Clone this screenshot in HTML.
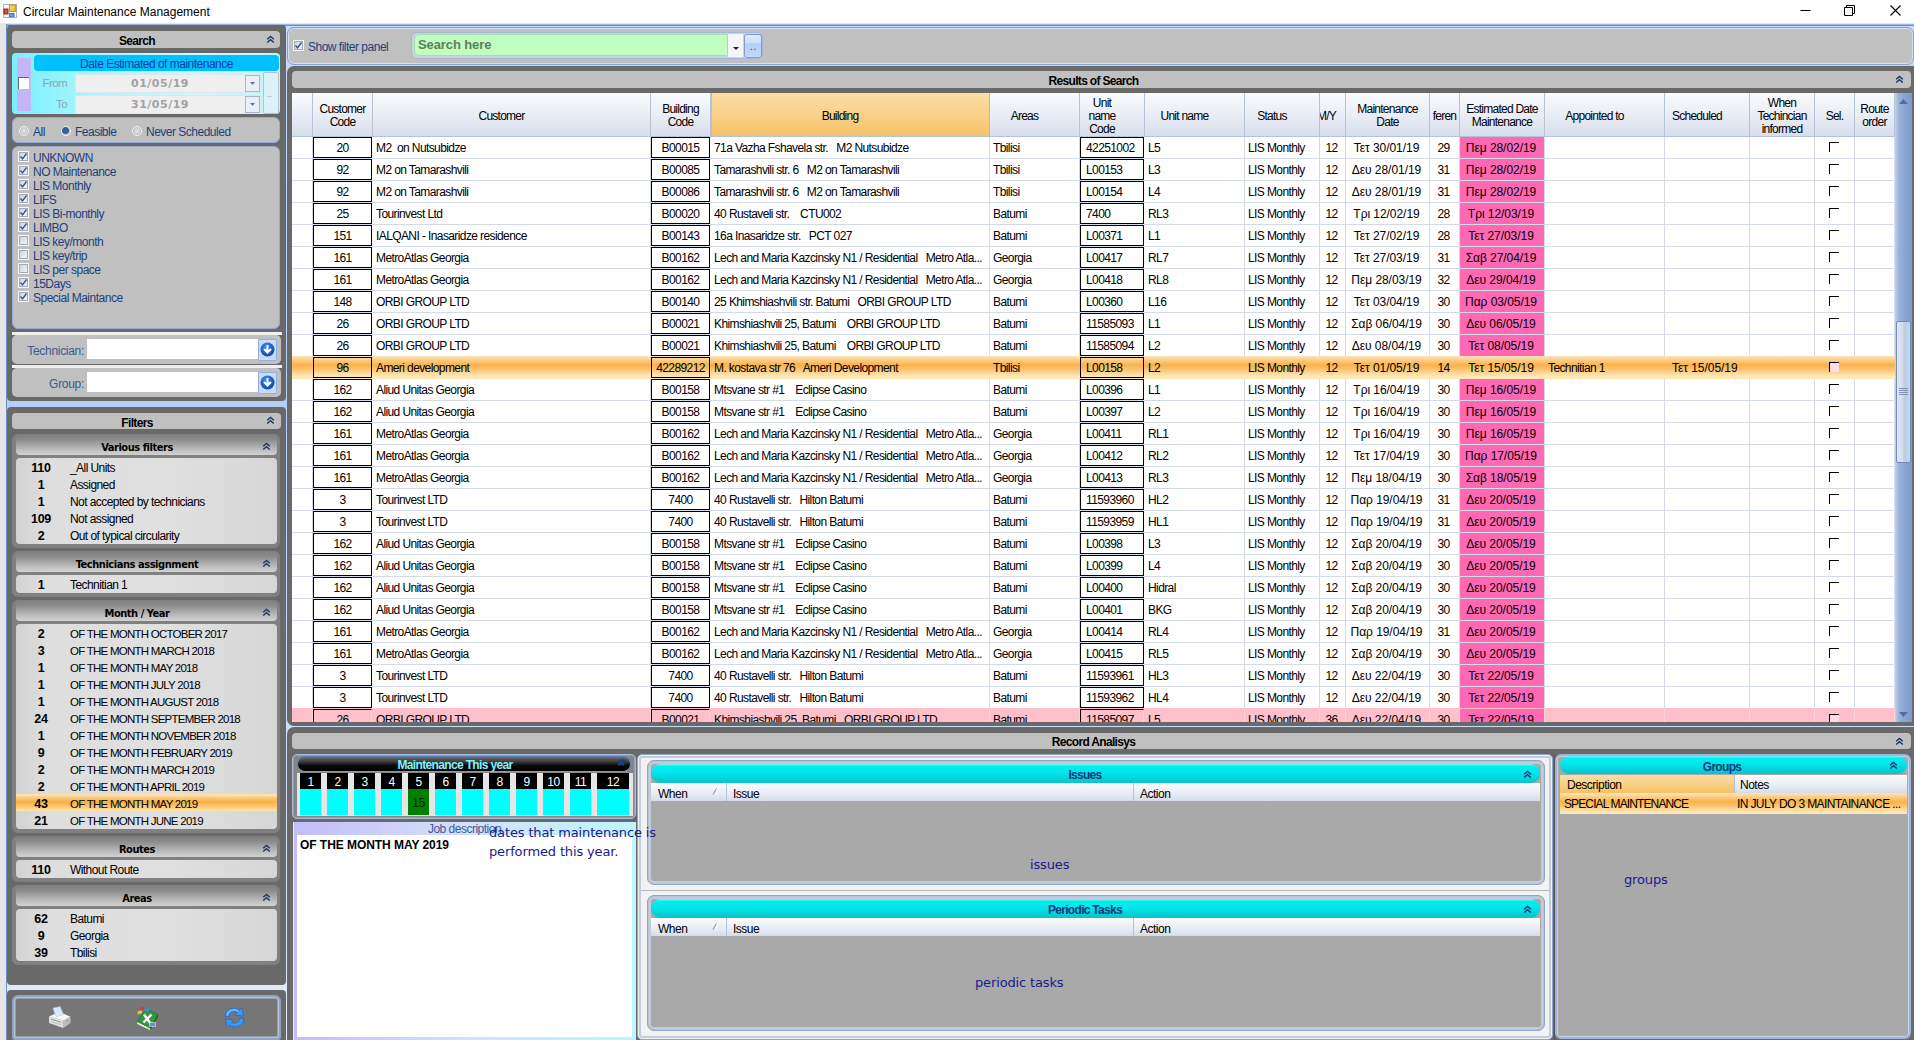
<!DOCTYPE html><html><head><meta charset="utf-8"><title>Circular Maintenance Management</title><style>
*{box-sizing:border-box;margin:0;padding:0}
html,body{width:1914px;height:1040px;overflow:hidden;background:linear-gradient(#c5daf6,#b6d0f5 40%,#e4ecfa);font-family:"Liberation Sans",sans-serif;font-size:12px;letter-spacing:-0.5px;color:#000}
.a{position:absolute}
.t{position:absolute;white-space:pre;line-height:14px}
#title{left:0;top:0;width:1914px;height:23px;background:#fff}
#title .cap{left:23px;top:4px;font-size:12px;line-height:16px;color:#000;letter-spacing:0}
.dark{background:#696969}
.silver{background:#c0c0c0}
.hdr{background:#c0c0c0;border-radius:4px}
.hdr b{position:absolute;top:1px;left:0;width:250px;text-align:center;font-size:12px;line-height:19px;letter-spacing:-0.67px}
.chev{position:absolute}
.blue{color:#1e3f7a}
.sub{background:#808080;border-radius:6px}
.subh{border-radius:5px 5px 4px 4px;background:linear-gradient(#7e7e7e,#8a8a8a 25%,#a4a4a4 50%,#c0c0c0 78%,#d2d2d2)}
.subh b{position:absolute;left:0;width:242px;text-align:center;font-family:'DejaVu Sans Condensed','DejaVu Sans',sans-serif;font-size:11px;line-height:20px;top:4px;letter-spacing:-0.45px}
.lst{background:linear-gradient(90deg,#d2d2d2,#dedede 12%,#e0e0e0 60%,#d6d6d6);border-radius:4px;overflow:hidden}
.lr{position:absolute;left:0;right:0;height:17px}
.lr .n{position:absolute;left:0;top:2px;width:50px;text-align:center;font-weight:bold;font-size:12.5px;line-height:17px;letter-spacing:-0.3px}
.lr .x{position:absolute;left:54px;top:2px;line-height:17px;white-space:pre;letter-spacing:-0.57px}
.lr .x.m{letter-spacing:-0.75px;font-size:11.5px}
.sel{background:linear-gradient(#fde6bd,#fbcb7e 22%,#f9ae42 46%,#fbc46c 70%,#fde5ae)}
.cb{position:absolute;width:11px;height:11px;border:1px solid #f6f6f6;background:linear-gradient(135deg,#c9cfd8,#e4e9f0 60%,#f2f4f8)}
.cb i{position:absolute;left:0;top:0;width:9px;height:9px;border:1px solid #a3abb8}
.rb{position:absolute;width:10px;height:10px;border-radius:50%;border:1.5px solid #f4f4f4;background:radial-gradient(#e0e0e0,#c4c4c4);box-shadow:inset 0 0 0 .6px #b0b0b0}
.gh{position:absolute;top:0;height:44px;padding-top:2px;border-right:1px solid #b4c3d8;display:flex;align-items:center;justify-content:center;text-align:center;line-height:13px;overflow:hidden;white-space:nowrap;background:linear-gradient(#f9fbfd,#e9edf5 50%,#d7ddeb);letter-spacing:-0.75px}
.row{position:absolute;left:0;width:1603px;height:22px;border-bottom:1px solid #d4dbe8;background:#fff}
.c{position:absolute;top:0;height:21px;line-height:21px;white-space:pre;overflow:hidden;border-right:1px solid #d4dbe8;padding-left:3px;letter-spacing:-0.6px;line-height:22px}
.c.dt{letter-spacing:-0.05px}
.c.bx{border:1px solid #000;text-align:center;padding:0;height:21px;top:0;line-height:20px;background:#fff}
.c.ct{text-align:center;padding:0 2px 0 0}
.pk{background:#ff69b4}
.ck{position:absolute;left:14px;top:5px;width:10px;height:10px;border-left:1px solid #000;border-top:1px solid #000;background:#fff}
.row.s{background:linear-gradient(#fde5be,#fbc97c 22%,#f9b24b 42%,#fbc06a 58%,#fddb9e 80%,#fdedc4);height:23px;margin-top:-1px;border-bottom-color:#fde8b4}
.row.s .c{top:1px}
.row.s .c{border-right-color:transparent}
.row.s .c.bx{background:transparent;border-color:#000}
.row.p{background:#ffc0cb;height:23px;margin-top:-1px}
.row.p .c{top:1px;border-right-color:#ffd3db}
.row.p .c.bx{background:transparent}
.cy{background:linear-gradient(#7ff6f8,#00f0f2 12%,#00e6ea 45%,#06cdd4 85%,#12bfc8);border-radius:9px}
.cy b{position:absolute;top:1px;left:0;right:0;text-align:center;font-size:12px;line-height:20px;color:#0a3a7a;letter-spacing:-0.7px}
.note{z-index:5;font-family:"DejaVu Sans",sans-serif;color:#1a1a8c;font-size:13px;letter-spacing:-0.14px}
</style></head><body>
<div id="title" class="a">
<svg class="a" style="left:3px;top:4px" width="14" height="14" viewBox="0 0 14 14"><defs><linearGradient id="ty" x1="0" y1="0" x2="1" y2="1"><stop offset="0" stop-color="#fbe27a"/><stop offset="1" stop-color="#e8b020"/></linearGradient></defs><rect x=".5" y=".5" width="13" height="13" fill="#fff" stroke="#b4b4b4"/><rect x="1" y="5" width="4" height="5" fill="#e05040" stroke="#8a1a14" stroke-width=".9"/><rect x="6.3" y="1" width="6.5" height="6.5" fill="url(#ty)" stroke="#b58a18" stroke-width=".9"/><rect x="6.3" y="9.5" width="4.8" height="3.3" fill="#6a9ae8" stroke="#3a66b8" stroke-width=".8"/></svg>
<div class="t cap">Circular Maintenance Management</div>
<svg class="a" style="left:1790px;top:0" width="124" height="23" viewBox="0 0 124 23"><path d="M10.5 10.5h10" stroke="#000" stroke-width="1" fill="none"/><path d="M54.5 7.5h8v8h-8z M56.5 7.5v-2h8v8h-2" stroke="#000" stroke-width="1" fill="none"/><path d="M100.5 5.5l10 10M110.5 5.5l-10 10" stroke="#000" stroke-width="1.1" fill="none"/></svg>
</div>
<div class="a" style="left:0;top:23px;width:7px;height:1017px;background:#e6e6e6;border-right:1px solid #6f8fc4"></div>
<div class="a" style="left:0;top:23px;width:1914px;height:1px;background:#dfe9f7"></div>
<div class="a" style="left:7px;top:24px;width:1907px;height:2px;background:linear-gradient(#b4c9e9,#5a7ab0)"></div>
<div class="a dark" style="left:7px;top:25px;width:279px;height:376px;border-radius:4px"></div>
<div class="a hdr" style="left:12px;top:31px;width:268px;height:17px"><b>Search</b><svg class="chev" style="left:254px;top:4px" width="9" height="9" viewBox="0 0 9 9"><path d="M1.2 4.3 L4.5 1.5 L7.8 4.3 M1.2 7.5 L4.5 4.7 L7.8 7.5" fill="none" stroke="#1c3868" stroke-width="1.45"/></svg></div>
<div class="a" style="left:12px;top:53px;width:268px;height:61px;border-radius:4px;background:linear-gradient(90deg,#7beffd,#a8f6fe 30%,#cffaff 70%,#b6f7ff)"></div>
<div class="a" style="left:17px;top:58px;width:14px;height:53px;background:#c3b7f7"></div>
<div class="a" style="left:18px;top:77px;width:11px;height:12px;background:#fff;border-left:1px solid #666;border-top:1px solid #666"></div>
<div class="a" style="left:34px;top:55px;width:245px;height:16px;background:#00bfff;border-radius:4px;text-align:center;line-height:18px;color:#10409c;font-size:12px">Date Estimated of maintenance</div>
<div class="a" style="left:75px;top:74px;width:186px;height:19px;background:#efefef;border:1px solid #dde6ea"></div>
<div class="t" style="left:36px;top:76px;width:31px;text-align:right;color:#8ba4b4;line-height:15px;font-size:11.5px;letter-spacing:-0.6px">From</div>
<div class="t" style="left:75px;top:76px;width:170px;text-align:center;color:#a3a3a3;font-family:DejaVu Sans,sans-serif;font-weight:bold;font-size:11px;letter-spacing:0.5px;line-height:15px">01/05/19</div>
<div class="a" style="left:245px;top:75px;width:15px;height:17px;background:#e9eef8;border:1px solid #a9b6cc"></div>
<svg class="a" style="left:250px;top:82px" width="5" height="3"><path d="M0 0h5L2.5 3z" fill="#6a7890"/></svg>
<div class="a" style="left:75px;top:95px;width:186px;height:19px;background:#efefef;border:1px solid #dde6ea"></div>
<div class="t" style="left:36px;top:97px;width:31px;text-align:right;color:#8ba4b4;line-height:15px;font-size:11.5px;letter-spacing:-0.6px">To</div>
<div class="t" style="left:75px;top:97px;width:170px;text-align:center;color:#a3a3a3;font-family:DejaVu Sans,sans-serif;font-weight:bold;font-size:11px;letter-spacing:0.5px;line-height:15px">31/05/19</div>
<div class="a" style="left:245px;top:96px;width:15px;height:17px;background:#e9eef8;border:1px solid #a9b6cc"></div>
<svg class="a" style="left:250px;top:103px" width="5" height="3"><path d="M0 0h5L2.5 3z" fill="#6a7890"/></svg>
<div class="a" style="left:263px;top:72px;width:16px;height:42px;background:#def1fb;border:1px solid #a9c6dc;border-radius:2px"></div>
<div class="t" style="left:267px;top:87px;color:#8ea0b8;font-size:10px">..</div>
<div class="a silver" style="left:12px;top:117px;width:268px;height:26px;border-radius:6px;border:1px solid #93a9cf"></div>
<div class="rb" style="left:19px;top:126px"></div>
<div class="t blue" style="left:33px;top:125px;font-size:12px">All</div>
<div class="rb" style="left:61px;top:126px"><div class="a" style="left:0;top:0;width:7px;height:7px;border-radius:50%;background:#3b5f9c"></div></div>
<div class="t blue" style="left:75px;top:125px;font-size:12px">Feasible</div>
<div class="rb" style="left:132px;top:126px"></div>
<div class="t blue" style="left:146px;top:125px;font-size:12px">Never Scheduled</div>
<div class="a silver" style="left:12px;top:146px;width:268px;height:183px;border-radius:6px;border:1px solid #93a9cf"></div>
<div class="cb" style="left:18px;top:151px"><i></i><svg class="a" style="left:0;top:0" width="9" height="9" viewBox="0 0 9 9"><path d="M1.5 4.5L3.5 6.8L7.5 1.5" stroke="#3a5488" stroke-width="1.4" fill="none"/></svg></div>
<div class="t blue" style="left:33px;top:151px;font-size:12px">UNKNOWN</div>
<div class="cb" style="left:18px;top:165px"><i></i><svg class="a" style="left:0;top:0" width="9" height="9" viewBox="0 0 9 9"><path d="M1.5 4.5L3.5 6.8L7.5 1.5" stroke="#3a5488" stroke-width="1.4" fill="none"/></svg></div>
<div class="t blue" style="left:33px;top:165px;font-size:12px">NO Maintenance</div>
<div class="cb" style="left:18px;top:179px"><i></i><svg class="a" style="left:0;top:0" width="9" height="9" viewBox="0 0 9 9"><path d="M1.5 4.5L3.5 6.8L7.5 1.5" stroke="#3a5488" stroke-width="1.4" fill="none"/></svg></div>
<div class="t blue" style="left:33px;top:179px;font-size:12px">LIS Monthly</div>
<div class="cb" style="left:18px;top:193px"><i></i><svg class="a" style="left:0;top:0" width="9" height="9" viewBox="0 0 9 9"><path d="M1.5 4.5L3.5 6.8L7.5 1.5" stroke="#3a5488" stroke-width="1.4" fill="none"/></svg></div>
<div class="t blue" style="left:33px;top:193px;font-size:12px">LIFS</div>
<div class="cb" style="left:18px;top:207px"><i></i><svg class="a" style="left:0;top:0" width="9" height="9" viewBox="0 0 9 9"><path d="M1.5 4.5L3.5 6.8L7.5 1.5" stroke="#3a5488" stroke-width="1.4" fill="none"/></svg></div>
<div class="t blue" style="left:33px;top:207px;font-size:12px">LIS Bi-monthly</div>
<div class="cb" style="left:18px;top:221px"><i></i><svg class="a" style="left:0;top:0" width="9" height="9" viewBox="0 0 9 9"><path d="M1.5 4.5L3.5 6.8L7.5 1.5" stroke="#3a5488" stroke-width="1.4" fill="none"/></svg></div>
<div class="t blue" style="left:33px;top:221px;font-size:12px">LIMBO</div>
<div class="cb" style="left:18px;top:235px"><i></i></div>
<div class="t blue" style="left:33px;top:235px;font-size:12px">LIS key/month</div>
<div class="cb" style="left:18px;top:249px"><i></i></div>
<div class="t blue" style="left:33px;top:249px;font-size:12px">LIS key/trip</div>
<div class="cb" style="left:18px;top:263px"><i></i></div>
<div class="t blue" style="left:33px;top:263px;font-size:12px">LIS per space</div>
<div class="cb" style="left:18px;top:277px"><i></i><svg class="a" style="left:0;top:0" width="9" height="9" viewBox="0 0 9 9"><path d="M1.5 4.5L3.5 6.8L7.5 1.5" stroke="#3a5488" stroke-width="1.4" fill="none"/></svg></div>
<div class="t blue" style="left:33px;top:277px;font-size:12px">15Days</div>
<div class="cb" style="left:18px;top:291px"><i></i><svg class="a" style="left:0;top:0" width="9" height="9" viewBox="0 0 9 9"><path d="M1.5 4.5L3.5 6.8L7.5 1.5" stroke="#3a5488" stroke-width="1.4" fill="none"/></svg></div>
<div class="t blue" style="left:33px;top:291px;font-size:12px">Special Maintance</div>
<div class="a" style="left:12px;top:332px;width:270px;height:3px;background:#f0f0f0"></div>
<div class="a silver" style="left:12px;top:335px;width:269px;height:29px;border-radius:5px"></div>
<div class="t blue" style="left:12px;top:344px;width:72px;text-align:right;font-size:12px;letter-spacing:-0.3px;color:#3b5a8e">Technician:</div>
<div class="a" style="left:87px;top:339px;width:171px;height:20px;background:#fff"></div>
<div class="a" style="left:258px;top:339px;width:19px;height:22px;background:#c6dcfa;border:1px solid #8fb0e0;border-radius:1px"></div>
<svg class="a" style="left:260px;top:342px" width="15" height="15" viewBox="0 0 15 15"><defs><radialGradient id="g335" cx=".4" cy=".3" r=".8"><stop offset="0" stop-color="#3d8ae8"/><stop offset="1" stop-color="#0a3f9e"/></radialGradient></defs><circle cx="7.5" cy="7.5" r="7" fill="url(#g335)"/><path d="M7.5 3v7M4 7l3.5 3.5L11 7" stroke="#fff" stroke-width="2" fill="none"/></svg>
<div class="a" style="left:12px;top:365px;width:270px;height:3px;background:#f0f0f0"></div>
<div class="a silver" style="left:12px;top:368px;width:269px;height:29px;border-radius:5px"></div>
<div class="t blue" style="left:12px;top:377px;width:72px;text-align:right;font-size:12px;letter-spacing:-0.3px;color:#3b5a8e">Group:</div>
<div class="a" style="left:87px;top:372px;width:171px;height:20px;background:#fff"></div>
<div class="a" style="left:258px;top:372px;width:19px;height:22px;background:#c6dcfa;border:1px solid #8fb0e0;border-radius:1px"></div>
<svg class="a" style="left:260px;top:375px" width="15" height="15" viewBox="0 0 15 15"><defs><radialGradient id="g368" cx=".4" cy=".3" r=".8"><stop offset="0" stop-color="#3d8ae8"/><stop offset="1" stop-color="#0a3f9e"/></radialGradient></defs><circle cx="7.5" cy="7.5" r="7" fill="url(#g368)"/><path d="M7.5 3v7M4 7l3.5 3.5L11 7" stroke="#fff" stroke-width="2" fill="none"/></svg>
<div class="a dark" style="left:7px;top:407px;width:279px;height:578px;border-radius:4px"></div>
<div class="a hdr" style="left:12px;top:413px;width:269px;height:16px"><b>Filters</b><svg class="chev" style="left:254px;top:3px" width="9" height="9" viewBox="0 0 9 9"><path d="M1.2 4.3 L4.5 1.5 L7.8 4.3 M1.2 7.5 L4.5 4.7 L7.8 7.5" fill="none" stroke="#1c3868" stroke-width="1.45"/></svg></div>
<div class="a sub" style="left:12px;top:434px;width:268px;height:114px"></div>
<div class="a subh" style="left:16px;top:434px;width:261px;height:21px"><b>Various filters</b><svg class="chev" style="left:246px;top:8px" width="9" height="9" viewBox="0 0 9 9"><path d="M1.2 4.3 L4.5 1.5 L7.8 4.3 M1.2 7.5 L4.5 4.7 L7.8 7.5" fill="none" stroke="#1c3868" stroke-width="1.45"/></svg></div>
<div class="a lst" style="left:16px;top:458px;width:261px;height:86px">
<div class="lr" style="top:0px"><span class="n">110</span><span class="x">_All Units</span></div>
<div class="lr" style="top:17px"><span class="n">1</span><span class="x">Assigned</span></div>
<div class="lr" style="top:34px"><span class="n">1</span><span class="x">Not accepted by technicians</span></div>
<div class="lr" style="top:51px"><span class="n">109</span><span class="x">Not assigned</span></div>
<div class="lr" style="top:68px"><span class="n">2</span><span class="x">Out of typical circularity</span></div>
</div>
<div class="a sub" style="left:12px;top:551px;width:268px;height:46px"></div>
<div class="a subh" style="left:16px;top:551px;width:261px;height:21px"><b>Technicians assignment</b><svg class="chev" style="left:246px;top:8px" width="9" height="9" viewBox="0 0 9 9"><path d="M1.2 4.3 L4.5 1.5 L7.8 4.3 M1.2 7.5 L4.5 4.7 L7.8 7.5" fill="none" stroke="#1c3868" stroke-width="1.45"/></svg></div>
<div class="a lst" style="left:16px;top:575px;width:261px;height:18px">
<div class="lr" style="top:0px"><span class="n">1</span><span class="x">Technitian 1</span></div>
</div>
<div class="a sub" style="left:12px;top:600px;width:268px;height:233px"></div>
<div class="a subh" style="left:16px;top:600px;width:261px;height:21px"><b>Month / Year</b><svg class="chev" style="left:246px;top:8px" width="9" height="9" viewBox="0 0 9 9"><path d="M1.2 4.3 L4.5 1.5 L7.8 4.3 M1.2 7.5 L4.5 4.7 L7.8 7.5" fill="none" stroke="#1c3868" stroke-width="1.45"/></svg></div>
<div class="a lst" style="left:16px;top:624px;width:261px;height:205px">
<div class="lr" style="top:0px"><span class="n">2</span><span class="x m">OF THE MONTH OCTOBER 2017</span></div>
<div class="lr" style="top:17px"><span class="n">3</span><span class="x m">OF THE MONTH MARCH 2018</span></div>
<div class="lr" style="top:34px"><span class="n">1</span><span class="x m">OF THE MONTH MAY 2018</span></div>
<div class="lr" style="top:51px"><span class="n">1</span><span class="x m">OF THE MONTH JULY 2018</span></div>
<div class="lr" style="top:68px"><span class="n">1</span><span class="x m">OF THE MONTH AUGUST 2018</span></div>
<div class="lr" style="top:85px"><span class="n">24</span><span class="x m">OF THE MONTH SEPTEMBER 2018</span></div>
<div class="lr" style="top:102px"><span class="n">1</span><span class="x m">OF THE MONTH NOVEMBER 2018</span></div>
<div class="lr" style="top:119px"><span class="n">9</span><span class="x m">OF THE MONTH FEBRUARY 2019</span></div>
<div class="lr" style="top:136px"><span class="n">2</span><span class="x m">OF THE MONTH MARCH 2019</span></div>
<div class="lr" style="top:153px"><span class="n">2</span><span class="x m">OF THE MONTH APRIL 2019</span></div>
<div class="lr sel" style="top:170px"><span class="n">43</span><span class="x m">OF THE MONTH MAY 2019</span></div>
<div class="lr" style="top:187px"><span class="n">21</span><span class="x m">OF THE MONTH JUNE 2019</span></div>
</div>
<div class="a sub" style="left:12px;top:836px;width:268px;height:46px"></div>
<div class="a subh" style="left:16px;top:836px;width:261px;height:21px"><b>Routes</b><svg class="chev" style="left:246px;top:8px" width="9" height="9" viewBox="0 0 9 9"><path d="M1.2 4.3 L4.5 1.5 L7.8 4.3 M1.2 7.5 L4.5 4.7 L7.8 7.5" fill="none" stroke="#1c3868" stroke-width="1.45"/></svg></div>
<div class="a lst" style="left:16px;top:860px;width:261px;height:18px">
<div class="lr" style="top:0px"><span class="n">110</span><span class="x">Without Route</span></div>
</div>
<div class="a sub" style="left:12px;top:885px;width:268px;height:80px"></div>
<div class="a subh" style="left:16px;top:885px;width:261px;height:21px"><b>Areas</b><svg class="chev" style="left:246px;top:8px" width="9" height="9" viewBox="0 0 9 9"><path d="M1.2 4.3 L4.5 1.5 L7.8 4.3 M1.2 7.5 L4.5 4.7 L7.8 7.5" fill="none" stroke="#1c3868" stroke-width="1.45"/></svg></div>
<div class="a lst" style="left:16px;top:909px;width:261px;height:52px">
<div class="lr" style="top:0px"><span class="n">62</span><span class="x">Batumi</span></div>
<div class="lr" style="top:17px"><span class="n">9</span><span class="x">Georgia</span></div>
<div class="lr" style="top:34px"><span class="n">39</span><span class="x">Tbilisi</span></div>
</div>
<div class="a dark" style="left:7px;top:990px;width:279px;height:50px;border-radius:4px 4px 0 0"></div>
<div class="a" style="left:12px;top:995px;width:269px;height:45px;border-radius:6px 6px 3px 3px;background:#767676;border:2px solid #90a4c0;box-shadow:inset 0 0 0 1.5px #b2c1d7"></div>
<svg class="a" style="left:48px;top:1006px" width="24" height="23" viewBox="0 0 24 23"><path d="M5 2.2L12 .6l3.6 8.2-7.4 2z" fill="#d6e8fa" stroke="#b8cfe6" stroke-width=".5"/><path d="M1 10.5L7 7.8l1.3 3 7.3-2L15 7.6l7.5 3.2-7 4z" fill="#f6f6f6"/><path d="M1 10.5l14.5 4.3V22L1 17z" fill="#e2e2e2"/><path d="M15.5 14.8l7-4V17l-7 5z" fill="#bdbdbd"/><path d="M3 13.2l10.5 3.2" stroke="#8f9a8f" stroke-width="1"/><path d="M3 15.6l10.5 3.2" stroke="#b5b5b5" stroke-width=".8"/><circle cx="19.5" cy="15" r=".9" fill="#6fbf6f"/></svg>
<svg class="a" style="left:135px;top:1005px" width="25" height="26" viewBox="0 0 25 26"><path d="M2 17l9-13 12 5.5-8 14z" fill="#2f9a3c" stroke="#1c6a28" stroke-width=".7"/><path d="M15 23.5l8-14v2.2l-7.5 13.5z" fill="#17601f"/><path d="M2 17l13 6.5.5 1.7L2.5 19z" fill="#e9e9e9"/><path d="M2.6 18.2l1.2.6M5 19.4l1.2.6M7.4 20.6l1.2.6M9.8 21.8l1.2.6" stroke="#fff" stroke-width="1.4"/><path d="M9 9.5l6.5 9M16.5 9.5l-8 8" stroke="#fff" stroke-width="2.4"/><path d="M14.5 17.5h6v4h-6z" fill="#6e8fc9" stroke="#dfe8f6" stroke-width=".6"/><path d="M3 6.5c1.5-1.2 3-1.2 4.5-.4l-1.2 3c-1.4-.7-2.7-.5-4 .4z" fill="#f3c41b"/><path d="M4.8 2.4c1.6-1.2 3.2-1.2 4.8-.3L8.2 5.2c-1.4-.8-2.8-.7-4.2.3z" fill="#e2382b"/><path d="M10.4 3c1.5.9 3 .9 4.6-.2l-1.3 3.1c-1.4.9-2.8.9-4.4 0z" fill="#3f8fe0"/></svg>
<svg class="a" style="left:222px;top:1005px" width="25" height="25" viewBox="0 0 25 25"><path d="M3.2 11.5A8.6 8.2 0 0 1 17.6 5.2L19.8 2.6 21.6 11 13 10.2l2.3-2.5A5.2 5 0 0 0 7.2 11.8z" fill="#3b98f4" stroke="#1c68c8" stroke-width=".7"/><path d="M21.8 13.5A8.6 8.2 0 0 1 7.4 19.8L5.2 22.4 3.4 14 12 14.8l-2.3 2.5a5.2 5 0 0 0 8.1-4.1z" fill="#3b98f4" stroke="#1c68c8" stroke-width=".7"/><path d="M5 10.5A7 6.6 0 0 1 16.6 6.3" stroke="#9fd0ff" stroke-width="1" fill="none"/></svg>
<div class="a silver" style="left:287px;top:27px;width:1627px;height:38px;border-radius:7px;border:1px solid #86a3d4;box-shadow:inset 0 0 0 1px #d3dff2"></div>
<div class="cb" style="left:293px;top:40px"><i></i><svg class="a" style="left:0;top:0" width="9" height="9" viewBox="0 0 9 9"><path d="M1.5 4.5L3.5 6.8L7.5 1.5" stroke="#3a5488" stroke-width="1.4" fill="none"/></svg></div>
<div class="t blue" style="left:308px;top:40px;font-size:12px">Show filter panel</div>
<div class="a" style="left:411px;top:32px;width:352px;height:27px;border-radius:6px;border:1px solid #a4b7d6;background:#cfd4dc"></div>
<div class="a" style="left:414px;top:34px;width:314px;height:22px;border-radius:5px 0 0 5px;background:#c0ffc0;border:1px solid #a8dcb0"></div>
<div class="t" style="left:418px;top:37px;font-size:13px;font-weight:bold;color:#5e7f5e;line-height:16px;letter-spacing:-0.1px">Search here</div>
<div class="a" style="left:728px;top:34px;width:15px;height:23px;background:#f4f6fb"></div>
<svg class="a" style="left:732.5px;top:47px" width="6" height="3"><path d="M0 0h6L3 3z" fill="#1a2340"/></svg>
<div class="a" style="left:744px;top:34px;width:18px;height:24px;border-radius:3px;background:linear-gradient(#dde9fb,#cfe0fa 36%,#b2cdf5 40%,#c4d8f6);border:1px solid #7f9dcc"></div>
<div class="t" style="left:750px;top:40px;color:#2a3a6a;font-size:10px;letter-spacing:0.6px">..</div>
<div class="a dark" style="left:287px;top:66px;width:1627px;height:660px;border-radius:7px 0 0 7px"></div>
<div class="a hdr" style="left:292px;top:71px;width:1619px;height:17px"><b style="left:0;width:1603px">Results of Search</b><svg class="chev" style="left:1603px;top:4px" width="9" height="9" viewBox="0 0 9 9"><path d="M1.2 4.3 L4.5 1.5 L7.8 4.3 M1.2 7.5 L4.5 4.7 L7.8 7.5" fill="none" stroke="#1c3868" stroke-width="1.45"/></svg></div>
<div class="a" id="grid" style="left:292px;top:93px;width:1603px;height:629px;background:#fff;overflow:hidden">
<div class="gh" style="left:0px;width:21px"></div>
<div class="gh" style="left:21px;width:60px">Customer<br>Code</div>
<div class="gh" style="left:81px;width:278px;padding-right:20px">Customer</div>
<div class="gh" style="left:359px;width:60px">Building<br>Code</div>
<div class="gh" style="left:419px;width:279px;background:linear-gradient(#fbdda4,#f9d08a 50%,#f6c263);border-right-color:#e9b45a;box-shadow:inset 1px 0 0 #f0b860;padding-right:20px">Building</div>
<div class="gh" style="left:698px;width:90px;padding-right:20px">Areas</div>
<div class="gh" style="left:788px;width:65px;padding-right:20px">Unit<br>name<br>Code</div>
<div class="gh" style="left:853px;width:100px;padding-right:20px">Unit name</div>
<div class="gh" style="left:953px;width:75px;padding-right:20px">Status</div>
<div class="gh" style="left:1028px;width:26px;justify-content:flex-start;text-indent:-3px">M/Y</div>
<div class="gh" style="left:1054px;width:84px">Maintenance<br>Date</div>
<div class="gh" style="left:1138px;width:30px">feren</div>
<div class="gh" style="left:1168px;width:85px">Estimated Date<br>Maintenance</div>
<div class="gh" style="left:1253px;width:120px;padding-right:20px">Appointed to</div>
<div class="gh" style="left:1373px;width:85px;padding-right:20px">Scheduled</div>
<div class="gh" style="left:1458px;width:65px">When<br>Techincian<br>informed</div>
<div class="gh" style="left:1523px;width:40px">Sel.</div>
<div class="gh" style="left:1563px;width:40px">Route<br>order</div>
<div class="a" style="left:0;top:43px;width:1603px;height:1px;background:#b4c3d8"></div>
<div class="row" style="top:44px">
<div class="c " style="left:0px;width:21px"></div>
<div class="c bx" style="left:21px;width:59px">20</div>
<div class="c " style="left:81px;width:278px">M2  on Nutsubidze</div>
<div class="c bx" style="left:359px;width:59px">B00015</div>
<div class="c " style="left:419px;width:279px">71a Vazha Fshavela str.   M2 Nutsubidze</div>
<div class="c " style="left:698px;width:90px">Tbilisi</div>
<div class="c bx" style="left:788px;width:64px;text-align:left;padding-left:5px">42251002</div>
<div class="c " style="left:853px;width:100px">L5</div>
<div class="c " style="left:953px;width:75px">LIS Monthly</div>
<div class="c ct" style="left:1028px;width:26px">12</div>
<div class="c ct dt" style="left:1054px;width:84px">Τετ 30/01/19</div>
<div class="c ct" style="left:1138px;width:30px">29</div>
<div class="c ct dt pk" style="left:1168px;width:85px">Πεμ 28/02/19</div>
<div class="c " style="left:1253px;width:120px"></div>
<div class="c dt" style="left:1373px;width:85px;padding-left:7px"></div>
<div class="c " style="left:1458px;width:65px"></div>
<div class="c" style="left:1523px;width:40px"><div class="ck" style=""></div></div>
<div class="c " style="left:1563px;width:40px"></div>
</div>
<div class="row" style="top:66px">
<div class="c " style="left:0px;width:21px"></div>
<div class="c bx" style="left:21px;width:59px">92</div>
<div class="c " style="left:81px;width:278px">M2 on Tamarashvili</div>
<div class="c bx" style="left:359px;width:59px">B00085</div>
<div class="c " style="left:419px;width:279px">Tamarashvili str. 6   M2 on Tamarashvili</div>
<div class="c " style="left:698px;width:90px">Tbilisi</div>
<div class="c bx" style="left:788px;width:64px;text-align:left;padding-left:5px">L00153</div>
<div class="c " style="left:853px;width:100px">L3</div>
<div class="c " style="left:953px;width:75px">LIS Monthly</div>
<div class="c ct" style="left:1028px;width:26px">12</div>
<div class="c ct dt" style="left:1054px;width:84px">Δευ 28/01/19</div>
<div class="c ct" style="left:1138px;width:30px">31</div>
<div class="c ct dt pk" style="left:1168px;width:85px">Πεμ 28/02/19</div>
<div class="c " style="left:1253px;width:120px"></div>
<div class="c dt" style="left:1373px;width:85px;padding-left:7px"></div>
<div class="c " style="left:1458px;width:65px"></div>
<div class="c" style="left:1523px;width:40px"><div class="ck" style=""></div></div>
<div class="c " style="left:1563px;width:40px"></div>
</div>
<div class="row" style="top:88px">
<div class="c " style="left:0px;width:21px"></div>
<div class="c bx" style="left:21px;width:59px">92</div>
<div class="c " style="left:81px;width:278px">M2 on Tamarashvili</div>
<div class="c bx" style="left:359px;width:59px">B00086</div>
<div class="c " style="left:419px;width:279px">Tamarashvili str. 6   M2 on Tamarashvili</div>
<div class="c " style="left:698px;width:90px">Tbilisi</div>
<div class="c bx" style="left:788px;width:64px;text-align:left;padding-left:5px">L00154</div>
<div class="c " style="left:853px;width:100px">L4</div>
<div class="c " style="left:953px;width:75px">LIS Monthly</div>
<div class="c ct" style="left:1028px;width:26px">12</div>
<div class="c ct dt" style="left:1054px;width:84px">Δευ 28/01/19</div>
<div class="c ct" style="left:1138px;width:30px">31</div>
<div class="c ct dt pk" style="left:1168px;width:85px">Πεμ 28/02/19</div>
<div class="c " style="left:1253px;width:120px"></div>
<div class="c dt" style="left:1373px;width:85px;padding-left:7px"></div>
<div class="c " style="left:1458px;width:65px"></div>
<div class="c" style="left:1523px;width:40px"><div class="ck" style=""></div></div>
<div class="c " style="left:1563px;width:40px"></div>
</div>
<div class="row" style="top:110px">
<div class="c " style="left:0px;width:21px"></div>
<div class="c bx" style="left:21px;width:59px">25</div>
<div class="c " style="left:81px;width:278px">Tourinvest Ltd</div>
<div class="c bx" style="left:359px;width:59px">B00020</div>
<div class="c " style="left:419px;width:279px">40 Rustaveli str.    CTU002</div>
<div class="c " style="left:698px;width:90px">Batumi</div>
<div class="c bx" style="left:788px;width:64px;text-align:left;padding-left:5px">7400</div>
<div class="c " style="left:853px;width:100px">RL3</div>
<div class="c " style="left:953px;width:75px">LIS Monthly</div>
<div class="c ct" style="left:1028px;width:26px">12</div>
<div class="c ct dt" style="left:1054px;width:84px">Τρι 12/02/19</div>
<div class="c ct" style="left:1138px;width:30px">28</div>
<div class="c ct dt pk" style="left:1168px;width:85px">Τρι 12/03/19</div>
<div class="c " style="left:1253px;width:120px"></div>
<div class="c dt" style="left:1373px;width:85px;padding-left:7px"></div>
<div class="c " style="left:1458px;width:65px"></div>
<div class="c" style="left:1523px;width:40px"><div class="ck" style=""></div></div>
<div class="c " style="left:1563px;width:40px"></div>
</div>
<div class="row" style="top:132px">
<div class="c " style="left:0px;width:21px"></div>
<div class="c bx" style="left:21px;width:59px">151</div>
<div class="c " style="left:81px;width:278px">IALQANI - Inasaridze residence</div>
<div class="c bx" style="left:359px;width:59px">B00143</div>
<div class="c " style="left:419px;width:279px">16a Inasaridze str.   PCT 027</div>
<div class="c " style="left:698px;width:90px">Batumi</div>
<div class="c bx" style="left:788px;width:64px;text-align:left;padding-left:5px">L00371</div>
<div class="c " style="left:853px;width:100px">L1</div>
<div class="c " style="left:953px;width:75px">LIS Monthly</div>
<div class="c ct" style="left:1028px;width:26px">12</div>
<div class="c ct dt" style="left:1054px;width:84px">Τετ 27/02/19</div>
<div class="c ct" style="left:1138px;width:30px">28</div>
<div class="c ct dt pk" style="left:1168px;width:85px">Τετ 27/03/19</div>
<div class="c " style="left:1253px;width:120px"></div>
<div class="c dt" style="left:1373px;width:85px;padding-left:7px"></div>
<div class="c " style="left:1458px;width:65px"></div>
<div class="c" style="left:1523px;width:40px"><div class="ck" style=""></div></div>
<div class="c " style="left:1563px;width:40px"></div>
</div>
<div class="row" style="top:154px">
<div class="c " style="left:0px;width:21px"></div>
<div class="c bx" style="left:21px;width:59px">161</div>
<div class="c " style="left:81px;width:278px">MetroAtlas Georgia</div>
<div class="c bx" style="left:359px;width:59px">B00162</div>
<div class="c " style="left:419px;width:279px">Lech and Maria Kazcinsky N1 / Residential   Metro Atla...</div>
<div class="c " style="left:698px;width:90px">Georgia</div>
<div class="c bx" style="left:788px;width:64px;text-align:left;padding-left:5px">L00417</div>
<div class="c " style="left:853px;width:100px">RL7</div>
<div class="c " style="left:953px;width:75px">LIS Monthly</div>
<div class="c ct" style="left:1028px;width:26px">12</div>
<div class="c ct dt" style="left:1054px;width:84px">Τετ 27/03/19</div>
<div class="c ct" style="left:1138px;width:30px">31</div>
<div class="c ct dt pk" style="left:1168px;width:85px">Σαβ 27/04/19</div>
<div class="c " style="left:1253px;width:120px"></div>
<div class="c dt" style="left:1373px;width:85px;padding-left:7px"></div>
<div class="c " style="left:1458px;width:65px"></div>
<div class="c" style="left:1523px;width:40px"><div class="ck" style=""></div></div>
<div class="c " style="left:1563px;width:40px"></div>
</div>
<div class="row" style="top:176px">
<div class="c " style="left:0px;width:21px"></div>
<div class="c bx" style="left:21px;width:59px">161</div>
<div class="c " style="left:81px;width:278px">MetroAtlas Georgia</div>
<div class="c bx" style="left:359px;width:59px">B00162</div>
<div class="c " style="left:419px;width:279px">Lech and Maria Kazcinsky N1 / Residential   Metro Atla...</div>
<div class="c " style="left:698px;width:90px">Georgia</div>
<div class="c bx" style="left:788px;width:64px;text-align:left;padding-left:5px">L00418</div>
<div class="c " style="left:853px;width:100px">RL8</div>
<div class="c " style="left:953px;width:75px">LIS Monthly</div>
<div class="c ct" style="left:1028px;width:26px">12</div>
<div class="c ct dt" style="left:1054px;width:84px">Πεμ 28/03/19</div>
<div class="c ct" style="left:1138px;width:30px">32</div>
<div class="c ct dt pk" style="left:1168px;width:85px">Δευ 29/04/19</div>
<div class="c " style="left:1253px;width:120px"></div>
<div class="c dt" style="left:1373px;width:85px;padding-left:7px"></div>
<div class="c " style="left:1458px;width:65px"></div>
<div class="c" style="left:1523px;width:40px"><div class="ck" style=""></div></div>
<div class="c " style="left:1563px;width:40px"></div>
</div>
<div class="row" style="top:198px">
<div class="c " style="left:0px;width:21px"></div>
<div class="c bx" style="left:21px;width:59px">148</div>
<div class="c " style="left:81px;width:278px">ORBI GROUP LTD</div>
<div class="c bx" style="left:359px;width:59px">B00140</div>
<div class="c " style="left:419px;width:279px">25 Khimshiashvili str. Batumi   ORBI GROUP LTD</div>
<div class="c " style="left:698px;width:90px">Batumi</div>
<div class="c bx" style="left:788px;width:64px;text-align:left;padding-left:5px">L00360</div>
<div class="c " style="left:853px;width:100px">L16</div>
<div class="c " style="left:953px;width:75px">LIS Monthly</div>
<div class="c ct" style="left:1028px;width:26px">12</div>
<div class="c ct dt" style="left:1054px;width:84px">Τετ 03/04/19</div>
<div class="c ct" style="left:1138px;width:30px">30</div>
<div class="c ct dt pk" style="left:1168px;width:85px">Παρ 03/05/19</div>
<div class="c " style="left:1253px;width:120px"></div>
<div class="c dt" style="left:1373px;width:85px;padding-left:7px"></div>
<div class="c " style="left:1458px;width:65px"></div>
<div class="c" style="left:1523px;width:40px"><div class="ck" style=""></div></div>
<div class="c " style="left:1563px;width:40px"></div>
</div>
<div class="row" style="top:220px">
<div class="c " style="left:0px;width:21px"></div>
<div class="c bx" style="left:21px;width:59px">26</div>
<div class="c " style="left:81px;width:278px">ORBI GROUP LTD</div>
<div class="c bx" style="left:359px;width:59px">B00021</div>
<div class="c " style="left:419px;width:279px">Khimshiashvili 25, Batumi    ORBI GROUP LTD</div>
<div class="c " style="left:698px;width:90px">Batumi</div>
<div class="c bx" style="left:788px;width:64px;text-align:left;padding-left:5px">11585093</div>
<div class="c " style="left:853px;width:100px">L1</div>
<div class="c " style="left:953px;width:75px">LIS Monthly</div>
<div class="c ct" style="left:1028px;width:26px">12</div>
<div class="c ct dt" style="left:1054px;width:84px">Σαβ 06/04/19</div>
<div class="c ct" style="left:1138px;width:30px">30</div>
<div class="c ct dt pk" style="left:1168px;width:85px">Δευ 06/05/19</div>
<div class="c " style="left:1253px;width:120px"></div>
<div class="c dt" style="left:1373px;width:85px;padding-left:7px"></div>
<div class="c " style="left:1458px;width:65px"></div>
<div class="c" style="left:1523px;width:40px"><div class="ck" style=""></div></div>
<div class="c " style="left:1563px;width:40px"></div>
</div>
<div class="row" style="top:242px">
<div class="c " style="left:0px;width:21px"></div>
<div class="c bx" style="left:21px;width:59px">26</div>
<div class="c " style="left:81px;width:278px">ORBI GROUP LTD</div>
<div class="c bx" style="left:359px;width:59px">B00021</div>
<div class="c " style="left:419px;width:279px">Khimshiashvili 25, Batumi    ORBI GROUP LTD</div>
<div class="c " style="left:698px;width:90px">Batumi</div>
<div class="c bx" style="left:788px;width:64px;text-align:left;padding-left:5px">11585094</div>
<div class="c " style="left:853px;width:100px">L2</div>
<div class="c " style="left:953px;width:75px">LIS Monthly</div>
<div class="c ct" style="left:1028px;width:26px">12</div>
<div class="c ct dt" style="left:1054px;width:84px">Δευ 08/04/19</div>
<div class="c ct" style="left:1138px;width:30px">30</div>
<div class="c ct dt pk" style="left:1168px;width:85px">Τετ 08/05/19</div>
<div class="c " style="left:1253px;width:120px"></div>
<div class="c dt" style="left:1373px;width:85px;padding-left:7px"></div>
<div class="c " style="left:1458px;width:65px"></div>
<div class="c" style="left:1523px;width:40px"><div class="ck" style=""></div></div>
<div class="c " style="left:1563px;width:40px"></div>
</div>
<div class="row s" style="top:264px">
<div class="c " style="left:0px;width:21px"></div>
<div class="c bx" style="left:21px;width:59px">96</div>
<div class="c " style="left:81px;width:278px">Ameri development</div>
<div class="c bx" style="left:359px;width:59px">42289212</div>
<div class="c " style="left:419px;width:279px">M. kostava str 76   Ameri Development</div>
<div class="c " style="left:698px;width:90px">Tbilisi</div>
<div class="c bx" style="left:788px;width:64px;text-align:left;padding-left:5px">L00158</div>
<div class="c " style="left:853px;width:100px">L2</div>
<div class="c " style="left:953px;width:75px">LIS Monthly</div>
<div class="c ct" style="left:1028px;width:26px">12</div>
<div class="c ct dt" style="left:1054px;width:84px">Τετ 01/05/19</div>
<div class="c ct" style="left:1138px;width:30px">14</div>
<div class="c ct dt" style="left:1168px;width:85px">Τετ 15/05/19</div>
<div class="c " style="left:1253px;width:120px">Technitian 1</div>
<div class="c dt" style="left:1373px;width:85px;padding-left:7px">Τετ 15/05/19</div>
<div class="c " style="left:1458px;width:65px"></div>
<div class="c" style="left:1523px;width:40px"><div class="ck" style="background:#ffd9e6"></div></div>
<div class="c " style="left:1563px;width:40px"></div>
</div>
<div class="row" style="top:286px">
<div class="c " style="left:0px;width:21px"></div>
<div class="c bx" style="left:21px;width:59px">162</div>
<div class="c " style="left:81px;width:278px">Aliud Unitas Georgia</div>
<div class="c bx" style="left:359px;width:59px">B00158</div>
<div class="c " style="left:419px;width:279px">Mtsvane str #1    Eclipse Casino</div>
<div class="c " style="left:698px;width:90px">Batumi</div>
<div class="c bx" style="left:788px;width:64px;text-align:left;padding-left:5px">L00396</div>
<div class="c " style="left:853px;width:100px">L1</div>
<div class="c " style="left:953px;width:75px">LIS Monthly</div>
<div class="c ct" style="left:1028px;width:26px">12</div>
<div class="c ct dt" style="left:1054px;width:84px">Τρι 16/04/19</div>
<div class="c ct" style="left:1138px;width:30px">30</div>
<div class="c ct dt pk" style="left:1168px;width:85px">Πεμ 16/05/19</div>
<div class="c " style="left:1253px;width:120px"></div>
<div class="c dt" style="left:1373px;width:85px;padding-left:7px"></div>
<div class="c " style="left:1458px;width:65px"></div>
<div class="c" style="left:1523px;width:40px"><div class="ck" style=""></div></div>
<div class="c " style="left:1563px;width:40px"></div>
</div>
<div class="row" style="top:308px">
<div class="c " style="left:0px;width:21px"></div>
<div class="c bx" style="left:21px;width:59px">162</div>
<div class="c " style="left:81px;width:278px">Aliud Unitas Georgia</div>
<div class="c bx" style="left:359px;width:59px">B00158</div>
<div class="c " style="left:419px;width:279px">Mtsvane str #1    Eclipse Casino</div>
<div class="c " style="left:698px;width:90px">Batumi</div>
<div class="c bx" style="left:788px;width:64px;text-align:left;padding-left:5px">L00397</div>
<div class="c " style="left:853px;width:100px">L2</div>
<div class="c " style="left:953px;width:75px">LIS Monthly</div>
<div class="c ct" style="left:1028px;width:26px">12</div>
<div class="c ct dt" style="left:1054px;width:84px">Τρι 16/04/19</div>
<div class="c ct" style="left:1138px;width:30px">30</div>
<div class="c ct dt pk" style="left:1168px;width:85px">Πεμ 16/05/19</div>
<div class="c " style="left:1253px;width:120px"></div>
<div class="c dt" style="left:1373px;width:85px;padding-left:7px"></div>
<div class="c " style="left:1458px;width:65px"></div>
<div class="c" style="left:1523px;width:40px"><div class="ck" style=""></div></div>
<div class="c " style="left:1563px;width:40px"></div>
</div>
<div class="row" style="top:330px">
<div class="c " style="left:0px;width:21px"></div>
<div class="c bx" style="left:21px;width:59px">161</div>
<div class="c " style="left:81px;width:278px">MetroAtlas Georgia</div>
<div class="c bx" style="left:359px;width:59px">B00162</div>
<div class="c " style="left:419px;width:279px">Lech and Maria Kazcinsky N1 / Residential   Metro Atla...</div>
<div class="c " style="left:698px;width:90px">Georgia</div>
<div class="c bx" style="left:788px;width:64px;text-align:left;padding-left:5px">L00411</div>
<div class="c " style="left:853px;width:100px">RL1</div>
<div class="c " style="left:953px;width:75px">LIS Monthly</div>
<div class="c ct" style="left:1028px;width:26px">12</div>
<div class="c ct dt" style="left:1054px;width:84px">Τρι 16/04/19</div>
<div class="c ct" style="left:1138px;width:30px">30</div>
<div class="c ct dt pk" style="left:1168px;width:85px">Πεμ 16/05/19</div>
<div class="c " style="left:1253px;width:120px"></div>
<div class="c dt" style="left:1373px;width:85px;padding-left:7px"></div>
<div class="c " style="left:1458px;width:65px"></div>
<div class="c" style="left:1523px;width:40px"><div class="ck" style=""></div></div>
<div class="c " style="left:1563px;width:40px"></div>
</div>
<div class="row" style="top:352px">
<div class="c " style="left:0px;width:21px"></div>
<div class="c bx" style="left:21px;width:59px">161</div>
<div class="c " style="left:81px;width:278px">MetroAtlas Georgia</div>
<div class="c bx" style="left:359px;width:59px">B00162</div>
<div class="c " style="left:419px;width:279px">Lech and Maria Kazcinsky N1 / Residential   Metro Atla...</div>
<div class="c " style="left:698px;width:90px">Georgia</div>
<div class="c bx" style="left:788px;width:64px;text-align:left;padding-left:5px">L00412</div>
<div class="c " style="left:853px;width:100px">RL2</div>
<div class="c " style="left:953px;width:75px">LIS Monthly</div>
<div class="c ct" style="left:1028px;width:26px">12</div>
<div class="c ct dt" style="left:1054px;width:84px">Τετ 17/04/19</div>
<div class="c ct" style="left:1138px;width:30px">30</div>
<div class="c ct dt pk" style="left:1168px;width:85px">Παρ 17/05/19</div>
<div class="c " style="left:1253px;width:120px"></div>
<div class="c dt" style="left:1373px;width:85px;padding-left:7px"></div>
<div class="c " style="left:1458px;width:65px"></div>
<div class="c" style="left:1523px;width:40px"><div class="ck" style=""></div></div>
<div class="c " style="left:1563px;width:40px"></div>
</div>
<div class="row" style="top:374px">
<div class="c " style="left:0px;width:21px"></div>
<div class="c bx" style="left:21px;width:59px">161</div>
<div class="c " style="left:81px;width:278px">MetroAtlas Georgia</div>
<div class="c bx" style="left:359px;width:59px">B00162</div>
<div class="c " style="left:419px;width:279px">Lech and Maria Kazcinsky N1 / Residential   Metro Atla...</div>
<div class="c " style="left:698px;width:90px">Georgia</div>
<div class="c bx" style="left:788px;width:64px;text-align:left;padding-left:5px">L00413</div>
<div class="c " style="left:853px;width:100px">RL3</div>
<div class="c " style="left:953px;width:75px">LIS Monthly</div>
<div class="c ct" style="left:1028px;width:26px">12</div>
<div class="c ct dt" style="left:1054px;width:84px">Πεμ 18/04/19</div>
<div class="c ct" style="left:1138px;width:30px">30</div>
<div class="c ct dt pk" style="left:1168px;width:85px">Σαβ 18/05/19</div>
<div class="c " style="left:1253px;width:120px"></div>
<div class="c dt" style="left:1373px;width:85px;padding-left:7px"></div>
<div class="c " style="left:1458px;width:65px"></div>
<div class="c" style="left:1523px;width:40px"><div class="ck" style=""></div></div>
<div class="c " style="left:1563px;width:40px"></div>
</div>
<div class="row" style="top:396px">
<div class="c " style="left:0px;width:21px"></div>
<div class="c bx" style="left:21px;width:59px">3</div>
<div class="c " style="left:81px;width:278px">Tourinvest LTD</div>
<div class="c bx" style="left:359px;width:59px">7400</div>
<div class="c " style="left:419px;width:279px">40 Rustavelli str.   Hilton Batumi</div>
<div class="c " style="left:698px;width:90px">Batumi</div>
<div class="c bx" style="left:788px;width:64px;text-align:left;padding-left:5px">11593960</div>
<div class="c " style="left:853px;width:100px">HL2</div>
<div class="c " style="left:953px;width:75px">LIS Monthly</div>
<div class="c ct" style="left:1028px;width:26px">12</div>
<div class="c ct dt" style="left:1054px;width:84px">Παρ 19/04/19</div>
<div class="c ct" style="left:1138px;width:30px">31</div>
<div class="c ct dt pk" style="left:1168px;width:85px">Δευ 20/05/19</div>
<div class="c " style="left:1253px;width:120px"></div>
<div class="c dt" style="left:1373px;width:85px;padding-left:7px"></div>
<div class="c " style="left:1458px;width:65px"></div>
<div class="c" style="left:1523px;width:40px"><div class="ck" style=""></div></div>
<div class="c " style="left:1563px;width:40px"></div>
</div>
<div class="row" style="top:418px">
<div class="c " style="left:0px;width:21px"></div>
<div class="c bx" style="left:21px;width:59px">3</div>
<div class="c " style="left:81px;width:278px">Tourinvest LTD</div>
<div class="c bx" style="left:359px;width:59px">7400</div>
<div class="c " style="left:419px;width:279px">40 Rustavelli str.   Hilton Batumi</div>
<div class="c " style="left:698px;width:90px">Batumi</div>
<div class="c bx" style="left:788px;width:64px;text-align:left;padding-left:5px">11593959</div>
<div class="c " style="left:853px;width:100px">HL1</div>
<div class="c " style="left:953px;width:75px">LIS Monthly</div>
<div class="c ct" style="left:1028px;width:26px">12</div>
<div class="c ct dt" style="left:1054px;width:84px">Παρ 19/04/19</div>
<div class="c ct" style="left:1138px;width:30px">31</div>
<div class="c ct dt pk" style="left:1168px;width:85px">Δευ 20/05/19</div>
<div class="c " style="left:1253px;width:120px"></div>
<div class="c dt" style="left:1373px;width:85px;padding-left:7px"></div>
<div class="c " style="left:1458px;width:65px"></div>
<div class="c" style="left:1523px;width:40px"><div class="ck" style=""></div></div>
<div class="c " style="left:1563px;width:40px"></div>
</div>
<div class="row" style="top:440px">
<div class="c " style="left:0px;width:21px"></div>
<div class="c bx" style="left:21px;width:59px">162</div>
<div class="c " style="left:81px;width:278px">Aliud Unitas Georgia</div>
<div class="c bx" style="left:359px;width:59px">B00158</div>
<div class="c " style="left:419px;width:279px">Mtsvane str #1    Eclipse Casino</div>
<div class="c " style="left:698px;width:90px">Batumi</div>
<div class="c bx" style="left:788px;width:64px;text-align:left;padding-left:5px">L00398</div>
<div class="c " style="left:853px;width:100px">L3</div>
<div class="c " style="left:953px;width:75px">LIS Monthly</div>
<div class="c ct" style="left:1028px;width:26px">12</div>
<div class="c ct dt" style="left:1054px;width:84px">Σαβ 20/04/19</div>
<div class="c ct" style="left:1138px;width:30px">30</div>
<div class="c ct dt pk" style="left:1168px;width:85px">Δευ 20/05/19</div>
<div class="c " style="left:1253px;width:120px"></div>
<div class="c dt" style="left:1373px;width:85px;padding-left:7px"></div>
<div class="c " style="left:1458px;width:65px"></div>
<div class="c" style="left:1523px;width:40px"><div class="ck" style=""></div></div>
<div class="c " style="left:1563px;width:40px"></div>
</div>
<div class="row" style="top:462px">
<div class="c " style="left:0px;width:21px"></div>
<div class="c bx" style="left:21px;width:59px">162</div>
<div class="c " style="left:81px;width:278px">Aliud Unitas Georgia</div>
<div class="c bx" style="left:359px;width:59px">B00158</div>
<div class="c " style="left:419px;width:279px">Mtsvane str #1    Eclipse Casino</div>
<div class="c " style="left:698px;width:90px">Batumi</div>
<div class="c bx" style="left:788px;width:64px;text-align:left;padding-left:5px">L00399</div>
<div class="c " style="left:853px;width:100px">L4</div>
<div class="c " style="left:953px;width:75px">LIS Monthly</div>
<div class="c ct" style="left:1028px;width:26px">12</div>
<div class="c ct dt" style="left:1054px;width:84px">Σαβ 20/04/19</div>
<div class="c ct" style="left:1138px;width:30px">30</div>
<div class="c ct dt pk" style="left:1168px;width:85px">Δευ 20/05/19</div>
<div class="c " style="left:1253px;width:120px"></div>
<div class="c dt" style="left:1373px;width:85px;padding-left:7px"></div>
<div class="c " style="left:1458px;width:65px"></div>
<div class="c" style="left:1523px;width:40px"><div class="ck" style=""></div></div>
<div class="c " style="left:1563px;width:40px"></div>
</div>
<div class="row" style="top:484px">
<div class="c " style="left:0px;width:21px"></div>
<div class="c bx" style="left:21px;width:59px">162</div>
<div class="c " style="left:81px;width:278px">Aliud Unitas Georgia</div>
<div class="c bx" style="left:359px;width:59px">B00158</div>
<div class="c " style="left:419px;width:279px">Mtsvane str #1    Eclipse Casino</div>
<div class="c " style="left:698px;width:90px">Batumi</div>
<div class="c bx" style="left:788px;width:64px;text-align:left;padding-left:5px">L00400</div>
<div class="c " style="left:853px;width:100px">Hidral</div>
<div class="c " style="left:953px;width:75px">LIS Monthly</div>
<div class="c ct" style="left:1028px;width:26px">12</div>
<div class="c ct dt" style="left:1054px;width:84px">Σαβ 20/04/19</div>
<div class="c ct" style="left:1138px;width:30px">30</div>
<div class="c ct dt pk" style="left:1168px;width:85px">Δευ 20/05/19</div>
<div class="c " style="left:1253px;width:120px"></div>
<div class="c dt" style="left:1373px;width:85px;padding-left:7px"></div>
<div class="c " style="left:1458px;width:65px"></div>
<div class="c" style="left:1523px;width:40px"><div class="ck" style=""></div></div>
<div class="c " style="left:1563px;width:40px"></div>
</div>
<div class="row" style="top:506px">
<div class="c " style="left:0px;width:21px"></div>
<div class="c bx" style="left:21px;width:59px">162</div>
<div class="c " style="left:81px;width:278px">Aliud Unitas Georgia</div>
<div class="c bx" style="left:359px;width:59px">B00158</div>
<div class="c " style="left:419px;width:279px">Mtsvane str #1    Eclipse Casino</div>
<div class="c " style="left:698px;width:90px">Batumi</div>
<div class="c bx" style="left:788px;width:64px;text-align:left;padding-left:5px">L00401</div>
<div class="c " style="left:853px;width:100px">BKG</div>
<div class="c " style="left:953px;width:75px">LIS Monthly</div>
<div class="c ct" style="left:1028px;width:26px">12</div>
<div class="c ct dt" style="left:1054px;width:84px">Σαβ 20/04/19</div>
<div class="c ct" style="left:1138px;width:30px">30</div>
<div class="c ct dt pk" style="left:1168px;width:85px">Δευ 20/05/19</div>
<div class="c " style="left:1253px;width:120px"></div>
<div class="c dt" style="left:1373px;width:85px;padding-left:7px"></div>
<div class="c " style="left:1458px;width:65px"></div>
<div class="c" style="left:1523px;width:40px"><div class="ck" style=""></div></div>
<div class="c " style="left:1563px;width:40px"></div>
</div>
<div class="row" style="top:528px">
<div class="c " style="left:0px;width:21px"></div>
<div class="c bx" style="left:21px;width:59px">161</div>
<div class="c " style="left:81px;width:278px">MetroAtlas Georgia</div>
<div class="c bx" style="left:359px;width:59px">B00162</div>
<div class="c " style="left:419px;width:279px">Lech and Maria Kazcinsky N1 / Residential   Metro Atla...</div>
<div class="c " style="left:698px;width:90px">Georgia</div>
<div class="c bx" style="left:788px;width:64px;text-align:left;padding-left:5px">L00414</div>
<div class="c " style="left:853px;width:100px">RL4</div>
<div class="c " style="left:953px;width:75px">LIS Monthly</div>
<div class="c ct" style="left:1028px;width:26px">12</div>
<div class="c ct dt" style="left:1054px;width:84px">Παρ 19/04/19</div>
<div class="c ct" style="left:1138px;width:30px">31</div>
<div class="c ct dt pk" style="left:1168px;width:85px">Δευ 20/05/19</div>
<div class="c " style="left:1253px;width:120px"></div>
<div class="c dt" style="left:1373px;width:85px;padding-left:7px"></div>
<div class="c " style="left:1458px;width:65px"></div>
<div class="c" style="left:1523px;width:40px"><div class="ck" style=""></div></div>
<div class="c " style="left:1563px;width:40px"></div>
</div>
<div class="row" style="top:550px">
<div class="c " style="left:0px;width:21px"></div>
<div class="c bx" style="left:21px;width:59px">161</div>
<div class="c " style="left:81px;width:278px">MetroAtlas Georgia</div>
<div class="c bx" style="left:359px;width:59px">B00162</div>
<div class="c " style="left:419px;width:279px">Lech and Maria Kazcinsky N1 / Residential   Metro Atla...</div>
<div class="c " style="left:698px;width:90px">Georgia</div>
<div class="c bx" style="left:788px;width:64px;text-align:left;padding-left:5px">L00415</div>
<div class="c " style="left:853px;width:100px">RL5</div>
<div class="c " style="left:953px;width:75px">LIS Monthly</div>
<div class="c ct" style="left:1028px;width:26px">12</div>
<div class="c ct dt" style="left:1054px;width:84px">Σαβ 20/04/19</div>
<div class="c ct" style="left:1138px;width:30px">30</div>
<div class="c ct dt pk" style="left:1168px;width:85px">Δευ 20/05/19</div>
<div class="c " style="left:1253px;width:120px"></div>
<div class="c dt" style="left:1373px;width:85px;padding-left:7px"></div>
<div class="c " style="left:1458px;width:65px"></div>
<div class="c" style="left:1523px;width:40px"><div class="ck" style=""></div></div>
<div class="c " style="left:1563px;width:40px"></div>
</div>
<div class="row" style="top:572px">
<div class="c " style="left:0px;width:21px"></div>
<div class="c bx" style="left:21px;width:59px">3</div>
<div class="c " style="left:81px;width:278px">Tourinvest LTD</div>
<div class="c bx" style="left:359px;width:59px">7400</div>
<div class="c " style="left:419px;width:279px">40 Rustavelli str.   Hilton Batumi</div>
<div class="c " style="left:698px;width:90px">Batumi</div>
<div class="c bx" style="left:788px;width:64px;text-align:left;padding-left:5px">11593961</div>
<div class="c " style="left:853px;width:100px">HL3</div>
<div class="c " style="left:953px;width:75px">LIS Monthly</div>
<div class="c ct" style="left:1028px;width:26px">12</div>
<div class="c ct dt" style="left:1054px;width:84px">Δευ 22/04/19</div>
<div class="c ct" style="left:1138px;width:30px">30</div>
<div class="c ct dt pk" style="left:1168px;width:85px">Τετ 22/05/19</div>
<div class="c " style="left:1253px;width:120px"></div>
<div class="c dt" style="left:1373px;width:85px;padding-left:7px"></div>
<div class="c " style="left:1458px;width:65px"></div>
<div class="c" style="left:1523px;width:40px"><div class="ck" style=""></div></div>
<div class="c " style="left:1563px;width:40px"></div>
</div>
<div class="row" style="top:594px">
<div class="c " style="left:0px;width:21px"></div>
<div class="c bx" style="left:21px;width:59px">3</div>
<div class="c " style="left:81px;width:278px">Tourinvest LTD</div>
<div class="c bx" style="left:359px;width:59px">7400</div>
<div class="c " style="left:419px;width:279px">40 Rustavelli str.   Hilton Batumi</div>
<div class="c " style="left:698px;width:90px">Batumi</div>
<div class="c bx" style="left:788px;width:64px;text-align:left;padding-left:5px">11593962</div>
<div class="c " style="left:853px;width:100px">HL4</div>
<div class="c " style="left:953px;width:75px">LIS Monthly</div>
<div class="c ct" style="left:1028px;width:26px">12</div>
<div class="c ct dt" style="left:1054px;width:84px">Δευ 22/04/19</div>
<div class="c ct" style="left:1138px;width:30px">30</div>
<div class="c ct dt pk" style="left:1168px;width:85px">Τετ 22/05/19</div>
<div class="c " style="left:1253px;width:120px"></div>
<div class="c dt" style="left:1373px;width:85px;padding-left:7px"></div>
<div class="c " style="left:1458px;width:65px"></div>
<div class="c" style="left:1523px;width:40px"><div class="ck" style=""></div></div>
<div class="c " style="left:1563px;width:40px"></div>
</div>
<div class="row p" style="top:616px">
<div class="c " style="left:0px;width:21px"></div>
<div class="c bx" style="left:21px;width:59px">26</div>
<div class="c " style="left:81px;width:278px">ORBI GROUP LTD</div>
<div class="c bx" style="left:359px;width:59px">B00021</div>
<div class="c " style="left:419px;width:279px">Khimshiashvili 25, Batumi   ORBI GROUP LTD</div>
<div class="c " style="left:698px;width:90px">Batumi</div>
<div class="c bx" style="left:788px;width:64px;text-align:left;padding-left:5px">11585097</div>
<div class="c " style="left:853px;width:100px">L5</div>
<div class="c " style="left:953px;width:75px">LIS Monthly</div>
<div class="c ct" style="left:1028px;width:26px">36</div>
<div class="c ct dt" style="left:1054px;width:84px">Δευ 22/04/19</div>
<div class="c ct" style="left:1138px;width:30px">30</div>
<div class="c ct dt pk" style="left:1168px;width:85px">Τετ 22/05/19</div>
<div class="c " style="left:1253px;width:120px"></div>
<div class="c dt" style="left:1373px;width:85px;padding-left:7px"></div>
<div class="c " style="left:1458px;width:65px"></div>
<div class="c" style="left:1523px;width:40px"><div class="ck" style="background:#ffd9e6"></div></div>
<div class="c " style="left:1563px;width:40px"></div>
</div>
</div>
<div class="a" style="left:1895px;top:93px;width:17px;height:629px;background:linear-gradient(90deg,#c6d5ec,#9fb6dc 18%,#8ba7d4 50%,#7b9bcb)"></div>
<svg class="a" style="left:1899px;top:99px" width="9" height="5"><path d="M0 5L4.5 0L9 5z" fill="#4d6ea8"/></svg>
<svg class="a" style="left:1899px;top:712px" width="9" height="5"><path d="M0 0L4.5 5L9 0z" fill="#4d6ea8"/></svg>
<div class="a" style="left:1896px;top:321px;width:15px;height:142px;border-radius:2px;border:1px solid #6f8cbd;background:linear-gradient(90deg,#e3e9f4,#d2dced 45%,#bccbe3 55%,#c9d5ea)"></div>
<div class="a" style="left:1899px;top:388px;width:9px;height:7px;background:repeating-linear-gradient(#7f93b5 0 1px,transparent 1px 2px)"></div>
<div class="a dark" style="left:287px;top:727px;width:1627px;height:313px;border-radius:7px 0 0 0"></div>
<div class="a hdr" style="left:292px;top:733px;width:1619px;height:16px"><b style="left:0;top:0;width:1603px">Record Analisys</b><svg class="chev" style="left:1603px;top:4px" width="9" height="9" viewBox="0 0 9 9"><path d="M1.2 4.3 L4.5 1.5 L7.8 4.3 M1.2 7.5 L4.5 4.7 L7.8 7.5" fill="none" stroke="#1c3868" stroke-width="1.45"/></svg></div>
<div class="a" style="left:292px;top:754px;width:344px;height:65px;border-radius:5px;background:#868686;border:1px solid #a9bad6;box-shadow:inset 0 0 0 1px #8f9cb2"></div>
<div class="a" style="left:297px;top:756px;width:334px;height:16px;border-radius:8px;background:linear-gradient(#6e6e6e,#3a3a3a 35%,#0a0a0a 60%,#000);border:1px solid #5f7fb5;border-bottom-color:#8a9ab5"></div>
<div class="t" style="left:297px;top:758px;width:316px;text-align:center;color:#7ff2ff;font-weight:bold;font-size:12px;letter-spacing:-0.65px">Maintenance This year</div>
<div class="t" style="left:617px;top:756px;color:#1e3f7a;font-weight:bold;font-size:10px">✖</div>
<div class="a" style="left:297px;top:773px;width:336px;height:43px;background:#e6e6e6"></div>
<div class="a" style="left:300px;top:773px;width:21px;height:16px;background:#000;color:#fff;text-align:center;line-height:18px;font-size:12px">1</div>
<div class="a" style="left:300px;top:789px;width:21px;height:26px;background:#00ffff"></div>
<div class="a" style="left:327px;top:773px;width:21px;height:16px;background:#000;color:#fff;text-align:center;line-height:18px;font-size:12px">2</div>
<div class="a" style="left:327px;top:789px;width:21px;height:26px;background:#00ffff"></div>
<div class="a" style="left:354px;top:773px;width:21px;height:16px;background:#000;color:#fff;text-align:center;line-height:18px;font-size:12px">3</div>
<div class="a" style="left:354px;top:789px;width:21px;height:26px;background:#00ffff"></div>
<div class="a" style="left:381px;top:773px;width:21px;height:16px;background:#000;color:#fff;text-align:center;line-height:18px;font-size:12px">4</div>
<div class="a" style="left:381px;top:789px;width:21px;height:26px;background:#00ffff"></div>
<div class="a" style="left:408px;top:773px;width:21px;height:16px;background:#000;color:#fff;text-align:center;line-height:18px;font-size:12px">5</div>
<div class="a" style="left:408px;top:789px;width:21px;height:26px;background:#008000;color:#002000;text-align:center;line-height:28px">15</div>
<div class="a" style="left:435px;top:773px;width:21px;height:16px;background:#000;color:#fff;text-align:center;line-height:18px;font-size:12px">6</div>
<div class="a" style="left:435px;top:789px;width:21px;height:26px;background:#00ffff"></div>
<div class="a" style="left:462px;top:773px;width:21px;height:16px;background:#000;color:#fff;text-align:center;line-height:18px;font-size:12px">7</div>
<div class="a" style="left:462px;top:789px;width:21px;height:26px;background:#00ffff"></div>
<div class="a" style="left:489px;top:773px;width:21px;height:16px;background:#000;color:#fff;text-align:center;line-height:18px;font-size:12px">8</div>
<div class="a" style="left:489px;top:789px;width:21px;height:26px;background:#00ffff"></div>
<div class="a" style="left:516px;top:773px;width:21px;height:16px;background:#000;color:#fff;text-align:center;line-height:18px;font-size:12px">9</div>
<div class="a" style="left:516px;top:789px;width:21px;height:26px;background:#00ffff"></div>
<div class="a" style="left:543px;top:773px;width:21px;height:16px;background:#000;color:#fff;text-align:center;line-height:18px;font-size:12px">10</div>
<div class="a" style="left:543px;top:789px;width:21px;height:26px;background:#00ffff"></div>
<div class="a" style="left:570px;top:773px;width:21px;height:16px;background:#000;color:#fff;text-align:center;line-height:18px;font-size:12px">11</div>
<div class="a" style="left:570px;top:789px;width:21px;height:26px;background:#00ffff"></div>
<div class="a" style="left:597px;top:773px;width:32px;height:16px;background:#000;color:#fff;text-align:center;line-height:18px;font-size:12px">12</div>
<div class="a" style="left:597px;top:789px;width:32px;height:26px;background:#00ffff"></div>
<div class="a" style="left:293px;top:822px;width:343px;height:218px;background:linear-gradient(90deg,#c3bdf8,#d3e0fb 50%,#bdf6fd);border-left:1px solid #e4eefc"></div>
<div class="t" style="left:293px;top:823px;width:343px;text-align:center;color:#3b5a9a;font-size:12px;line-height:13px">Job description</div>
<div class="a" style="left:297px;top:835px;width:335px;height:202px;background:#fff"></div>
<div class="t" style="left:300px;top:838px;font-weight:bold;font-size:12px;letter-spacing:-0.05px">OF THE MONTH MAY 2019</div>
<div class="t note" style="left:489px;top:823px;line-height:19px">dates that maintenance is
performed this year.</div>
<div class="a" style="left:637px;top:754px;width:916px;height:286px;border-radius:5px;background:#f2f2f2;border:1px solid #8ea6cc;box-shadow:inset 0 0 0 1px #eef2f9,inset 0 0 0 3px #c3ccdb,inset 0 0 0 4px #f2f2f2"></div>
<div class="a" style="left:647px;top:760px;width:898px;height:125px;border-radius:7px;background:#a9a9a9;border:1px solid #8fa6cc;box-shadow:inset 0 0 0 1px #b9c4d8,inset 0 0 0 3px #c6cad2"></div>
<div class="a cy" style="left:651px;top:764px;width:889px;height:19px"><b style="left:0;width:868px">Issues</b><svg class="chev" style="left:872px;top:6px" width="9" height="9" viewBox="0 0 9 9"><path d="M1.2 4.3 L4.5 1.5 L7.8 4.3 M1.2 7.5 L4.5 4.7 L7.8 7.5" fill="none" stroke="#0a3a7a" stroke-width="1.45"/></svg></div>
<div class="a" style="left:651px;top:783px;width:889px;height:18px;background:linear-gradient(#fafbfd,#eef1f7 40%,#dde3ee 85%,#d3dae8)"></div>
<div class="t" style="left:658px;top:787px">When</div>
<svg class="a" style="left:712px;top:788px" width="6" height="7"><path d="M1 6.5L4.5 .5" stroke="#8a8a8a" stroke-width="1"/><path d="M5 1v5.5" stroke="#fff" stroke-width=".8"/></svg>
<div class="a" style="left:726px;top:783px;width:1px;height:18px;background:#b4c3d8"></div>
<div class="t" style="left:733px;top:787px">Issue</div>
<div class="a" style="left:1133px;top:783px;width:1px;height:18px;background:#b4c3d8"></div>
<div class="t" style="left:1140px;top:787px">Action</div>
<div class="a" style="left:641px;top:890px;width:908px;height:1px;background:#b8b8b8"></div>
<div class="a" style="left:641px;top:891px;width:908px;height:3px;background:#eef2fa"></div>
<div class="a" style="left:647px;top:895px;width:898px;height:136px;border-radius:7px;background:#a9a9a9;border:1px solid #8fa6cc;box-shadow:inset 0 0 0 1px #b9c4d8,inset 0 0 0 3px #c6cad2"></div>
<div class="a cy" style="left:651px;top:899px;width:889px;height:19px"><b style="left:0;width:868px">Periodic Tasks</b><svg class="chev" style="left:872px;top:6px" width="9" height="9" viewBox="0 0 9 9"><path d="M1.2 4.3 L4.5 1.5 L7.8 4.3 M1.2 7.5 L4.5 4.7 L7.8 7.5" fill="none" stroke="#0a3a7a" stroke-width="1.45"/></svg></div>
<div class="a" style="left:651px;top:918px;width:889px;height:18px;background:linear-gradient(#fafbfd,#eef1f7 40%,#dde3ee 85%,#d3dae8)"></div>
<div class="t" style="left:658px;top:922px">When</div>
<svg class="a" style="left:712px;top:923px" width="6" height="7"><path d="M1 6.5L4.5 .5" stroke="#8a8a8a" stroke-width="1"/><path d="M5 1v5.5" stroke="#fff" stroke-width=".8"/></svg>
<div class="a" style="left:726px;top:918px;width:1px;height:18px;background:#b4c3d8"></div>
<div class="t" style="left:733px;top:922px">Issue</div>
<div class="a" style="left:1133px;top:918px;width:1px;height:18px;background:#b4c3d8"></div>
<div class="t" style="left:1140px;top:922px">Action</div>
<div class="t note" style="left:1030px;top:858px">issues</div>
<div class="t note" style="left:975px;top:976px">periodic tasks</div>
<div class="a" style="left:1554px;top:754px;width:1px;height:286px;background:#555"></div>
<div class="a" style="left:1555px;top:754px;width:356px;height:285px;border-radius:6px;background:#a9a9a9;border:2px solid #9fb4d6;box-shadow:inset 0 0 0 1px #c9d3e4"></div>
<div class="a cy" style="left:1560px;top:756px;width:347px;height:18px"><b style="left:0;width:324px">Groups</b><svg class="chev" style="left:329px;top:5px" width="9" height="9" viewBox="0 0 9 9"><path d="M1.2 4.3 L4.5 1.5 L7.8 4.3 M1.2 7.5 L4.5 4.7 L7.8 7.5" fill="none" stroke="#0a3a7a" stroke-width="1.45"/></svg></div>
<div class="a" style="left:1560px;top:775px;width:174px;height:18px;background:linear-gradient(#fbdda4,#f9d08a 50%,#f6c263)"></div>
<div class="a" style="left:1734px;top:775px;width:173px;height:18px;background:linear-gradient(#fafbfd,#eef1f7 40%,#dde3ee 85%,#d3dae8);border-left:1px solid #b4c3d8"></div>
<div class="t" style="left:1567px;top:778px">Description</div>
<div class="t" style="left:1740px;top:778px">Notes</div>
<div class="a" style="left:1560px;top:793px;width:347px;height:21px;background:linear-gradient(#fde5be,#fbc97c 22%,#f9b24b 42%,#fbc06a 58%,#fddb9e 80%,#fdedc4)"></div>
<div class="t" style="left:1564px;top:797px;letter-spacing:-0.88px">SPECIAL MAINTENANCE</div>
<div class="t" style="left:1737px;top:797px;letter-spacing:-0.62px">IN JULY DO 3 MAINTAINANCE ...</div>
<div class="t note" style="left:1624px;top:873px">groups</div>
</body></html>
